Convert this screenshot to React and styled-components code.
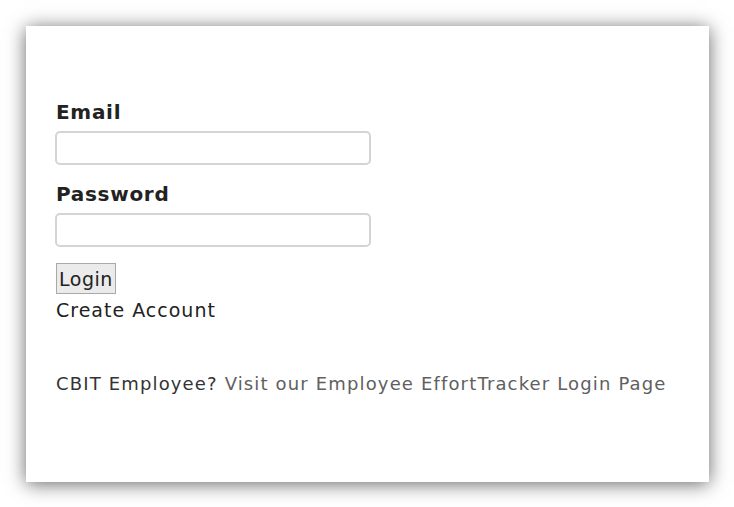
import React, { useState } from 'react';
import styled, { createGlobalStyle } from 'styled-components';

const GlobalStyle = createGlobalStyle`
    html, body {
        margin: 0;
        padding: 0;
        background: #fff;
    }
    body {
        font-family: "DejaVu Sans", Verdana, sans-serif;
        color: #222;
    }
`;

const Page = styled.div`
    width: 734px;
    height: 507px;
    padding: 26px 25px 25px 26px;
    box-sizing: border-box;
`;

const Card = styled.div`
    width: 683px;
    height: 456px;
    background: #fff;
    box-shadow: 0 2px 18px rgba(0, 0, 0, 0.6);
    box-sizing: border-box;
    padding: 75px 30px 0 30px;
    display: flex;
    flex-direction: column;
    align-items: flex-start;
`;

const Form = styled.form`
    display: flex;
    flex-direction: column;
    align-items: flex-start;
`;

const Label = styled.label`
    font-size: 20px;
    font-weight: bold;
    line-height: 22px;
    letter-spacing: 0.7px;
    color: #222;
    margin-bottom: 8px;
    margin-top: ${props => props.$first ? '0' : '18px'};
`;

const Input = styled.input`
    width: 316px;
    height: 34px;
    box-sizing: border-box;
    border: 2px solid #d4d4d4;
    border-radius: 5px;
    padding: 4px 8px;
    font-family: inherit;
    font-size: 16px;
    outline: none;
    margin: 0;
    margin-left: -1px;
`;

const LoginButton = styled.button`
    margin-top: 16px;
    height: 31px;
    padding: 0 2px;
    font-family: inherit;
    font-size: 19px;
    letter-spacing: 0.5px;
    color: #222;
    background: #ebebeb;
    border: 1px solid #a9a9a9;
    border-radius: 0;
`;

const CreateLink = styled.a`
    margin-top: 5px;
    font-size: 19px;
    line-height: 22px;
    letter-spacing: 1px;
    color: #222;
    text-decoration: none;
    cursor: pointer;
`;

const Footer = styled.p`
    margin: 53px 0 0 0;
    font-size: 18px;
    line-height: 20px;
    letter-spacing: 1.15px;
    color: #333;
    a {
        color: #606060;
        text-decoration: none;
    }
`;

function App() {
    const [form, setForm] = useState({ email: '', password: '' });

    const handleInput = name => e => {
        setForm({ ...form, [name]: e.target.value });
    };

    return (
        <Page>
            <GlobalStyle />
            <Card>
                <Form onSubmit={e => e.preventDefault()}>
                    <Label $first htmlFor="email">Email</Label>
                    <Input id="email" type="text" value={form.email} onChange={handleInput('email')} />
                    <Label htmlFor="password">Password</Label>
                    <Input id="password" type="password" value={form.password} onChange={handleInput('password')} />
                    <LoginButton type="submit">Login</LoginButton>
                </Form>
                <CreateLink>Create Account</CreateLink>
                <Footer>
                    CBIT Employee? <a href="#">Visit our Employee EffortTracker Login Page</a>
                </Footer>
            </Card>
        </Page>
    );
}

export default App;
